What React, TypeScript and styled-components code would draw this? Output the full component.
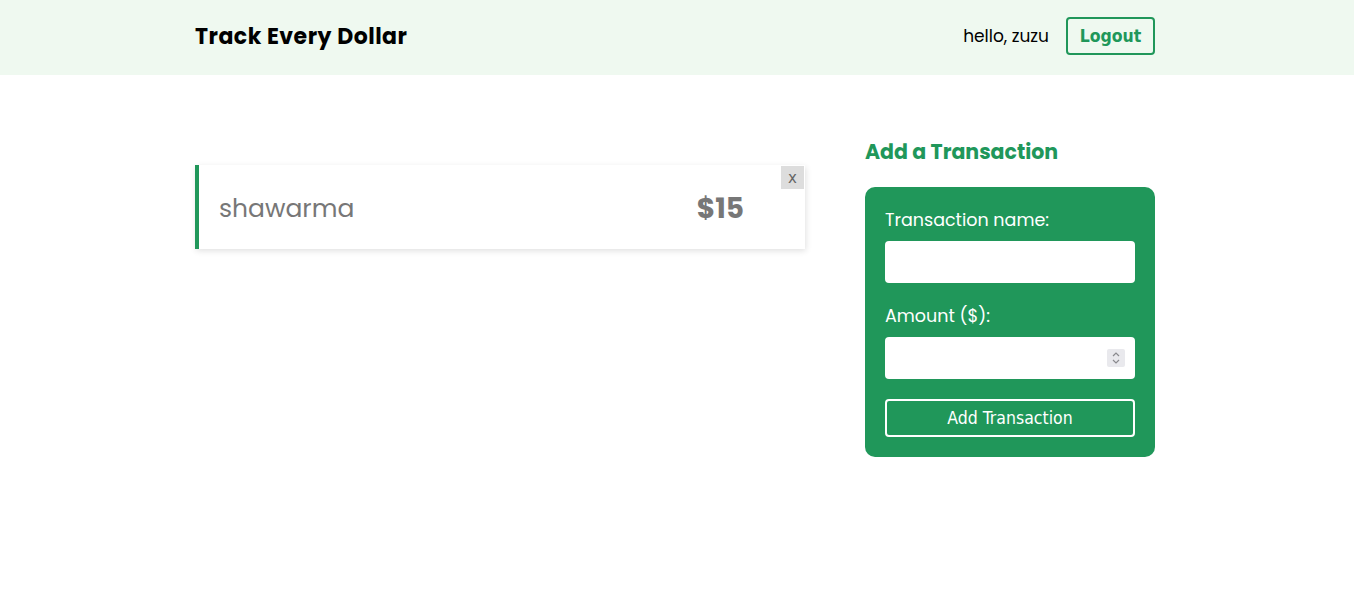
import React from 'react';
import styled, { createGlobalStyle } from 'styled-components';

const green = '#20975a';

const GlobalStyles = createGlobalStyle`
  * { box-sizing: border-box; }
  body {
    margin: 0;
    font-family: 'Poppins', Inter, 'Open Sans', sans-serif;
    background: #fff;
    color: #000;
  }
  input[type='number']::-webkit-inner-spin-button,
  input[type='number']::-webkit-outer-spin-button {
    -webkit-appearance: none;
    margin: 0;
  }
`;

const Container = styled.div`
  width: 960px;
  margin: 0 calc(50% - 478px) 0 calc(50% - 482px);
`;

const HeaderBar = styled.header`
  background: #eff9f0;
  height: 75px;
`;

const HeaderInner = styled(Container)`
  height: 100%;
  display: flex;
  align-items: center;
  justify-content: space-between;
  padding-bottom: 3px;
`;

const Title = styled.h1`
  margin: 0;
  font-size: 22px;
  font-weight: 700;
  letter-spacing: 0.5px;
`;

const UserArea = styled.div`
  display: flex;
  align-items: center;
  gap: 17px;
`;

const Greeting = styled.span`
  font-size: 17px;
`;

const LogoutButton = styled.button`
  width: 89px;
  height: 38px;
  background: transparent;
  border: 2px solid ${green};
  border-radius: 4px;
  color: ${green};
  font-family: 'DejaVu Sans Condensed', 'DejaVu Sans', Tahoma, sans-serif;
  font-weight: 700;
  font-size: 17.5px;
  cursor: pointer;
`;

const Main = styled(Container)`
  display: grid;
  grid-template-columns: 1fr 290px;
  gap: 60px;
  align-items: start;
  padding-top: 62px;
`;

const List = styled.ul`
  list-style: none;
  margin: 28px 0 0;
  padding: 0;
`;

const Item = styled.li`
  position: relative;
  display: flex;
  align-items: center;
  justify-content: space-between;
  height: 84px;
  padding: 3px 61px 0 20px;
  background: #fff;
  border-left: 4px solid ${green};
  box-shadow: 1px 2px 6px rgba(0, 0, 0, 0.12);
  color: #777;
`;

const ItemName = styled.span`
  font-size: 25px;
  font-weight: 400;
`;

const ItemAmount = styled.span`
  font-size: 28px;
  font-weight: 700;
`;

const DeleteButton = styled.button`
  position: absolute;
  top: 1px;
  right: 1px;
  width: 23px;
  height: 23px;
  padding: 0;
  border: none;
  background: #ddd;
  color: #666;
  font-family: 'DejaVu Sans', sans-serif;
  font-size: 15px;
  cursor: pointer;
`;

const SideHeading = styled.h3`
  margin: 0 0 20px;
  font-size: 20.5px;
  line-height: 30px;
  font-weight: 700;
  color: ${green};
`;

const Form = styled.form`
  background: ${green};
  border-radius: 10px;
  padding: 20px;
  display: flex;
  flex-direction: column;
`;

const Label = styled.label`
  color: #fff;
  font-size: 17.5px;
  line-height: 26px;
  margin-bottom: 8px;
`;

const Field = styled.div`
  position: relative;
  margin-bottom: 20px;
`;

const Input = styled.input`
  display: block;
  width: 100%;
  height: 42px;
  border: none;
  border-radius: 4px;
  padding: 0 36px 0 10px;
  font-size: 16px;
  background: #fff;
  outline: none;
`;

const Spinner = styled.span`
  position: absolute;
  right: 10px;
  top: 50%;
  transform: translateY(-50%);
  width: 18px;
  height: 18px;
  background: #e9e9ed;
  border-radius: 2px;
  display: flex;
  align-items: center;
  justify-content: center;
  pointer-events: none;
`;

const SubmitButton = styled.button`
  height: 38px;
  background: transparent;
  border: 2px solid #fff;
  border-radius: 4px;
  color: #fff;
  font-family: 'DejaVu Sans Condensed', 'DejaVu Sans', Tahoma, sans-serif;
  font-size: 17.5px;
  cursor: pointer;
`;

const SpinIcon = () => (
  <svg width="10" height="14" viewBox="0 0 10 14" fill="none" stroke="#8a8a8e" strokeWidth="1.2">
    <path d="M2 5 L5 2 L8 5" />
    <path d="M2 9 L5 12 L8 9" />
  </svg>
);

const App: React.FC = () => {
  return (
    <>
      <GlobalStyles />
      <HeaderBar>
        <HeaderInner>
          <Title>Track Every Dollar</Title>
          <UserArea>
            <Greeting>hello, zuzu</Greeting>
            <LogoutButton>Logout</LogoutButton>
          </UserArea>
        </HeaderInner>
      </HeaderBar>
      <Main>
        <List>
          <Item>
            <ItemName>shawarma</ItemName>
            <ItemAmount>$15</ItemAmount>
            <DeleteButton>x</DeleteButton>
          </Item>
        </List>
        <div>
          <SideHeading>Add a Transaction</SideHeading>
          <Form onSubmit={(e) => e.preventDefault()}>
            <Label htmlFor="name">Transaction name:</Label>
            <Field>
              <Input id="name" type="text" />
            </Field>
            <Label htmlFor="amount">Amount ($):</Label>
            <Field>
              <Input id="amount" type="number" />
              <Spinner>
                <SpinIcon />
              </Spinner>
            </Field>
            <SubmitButton type="submit">Add Transaction</SubmitButton>
          </Form>
        </div>
      </Main>
    </>
  );
};

export default App;
